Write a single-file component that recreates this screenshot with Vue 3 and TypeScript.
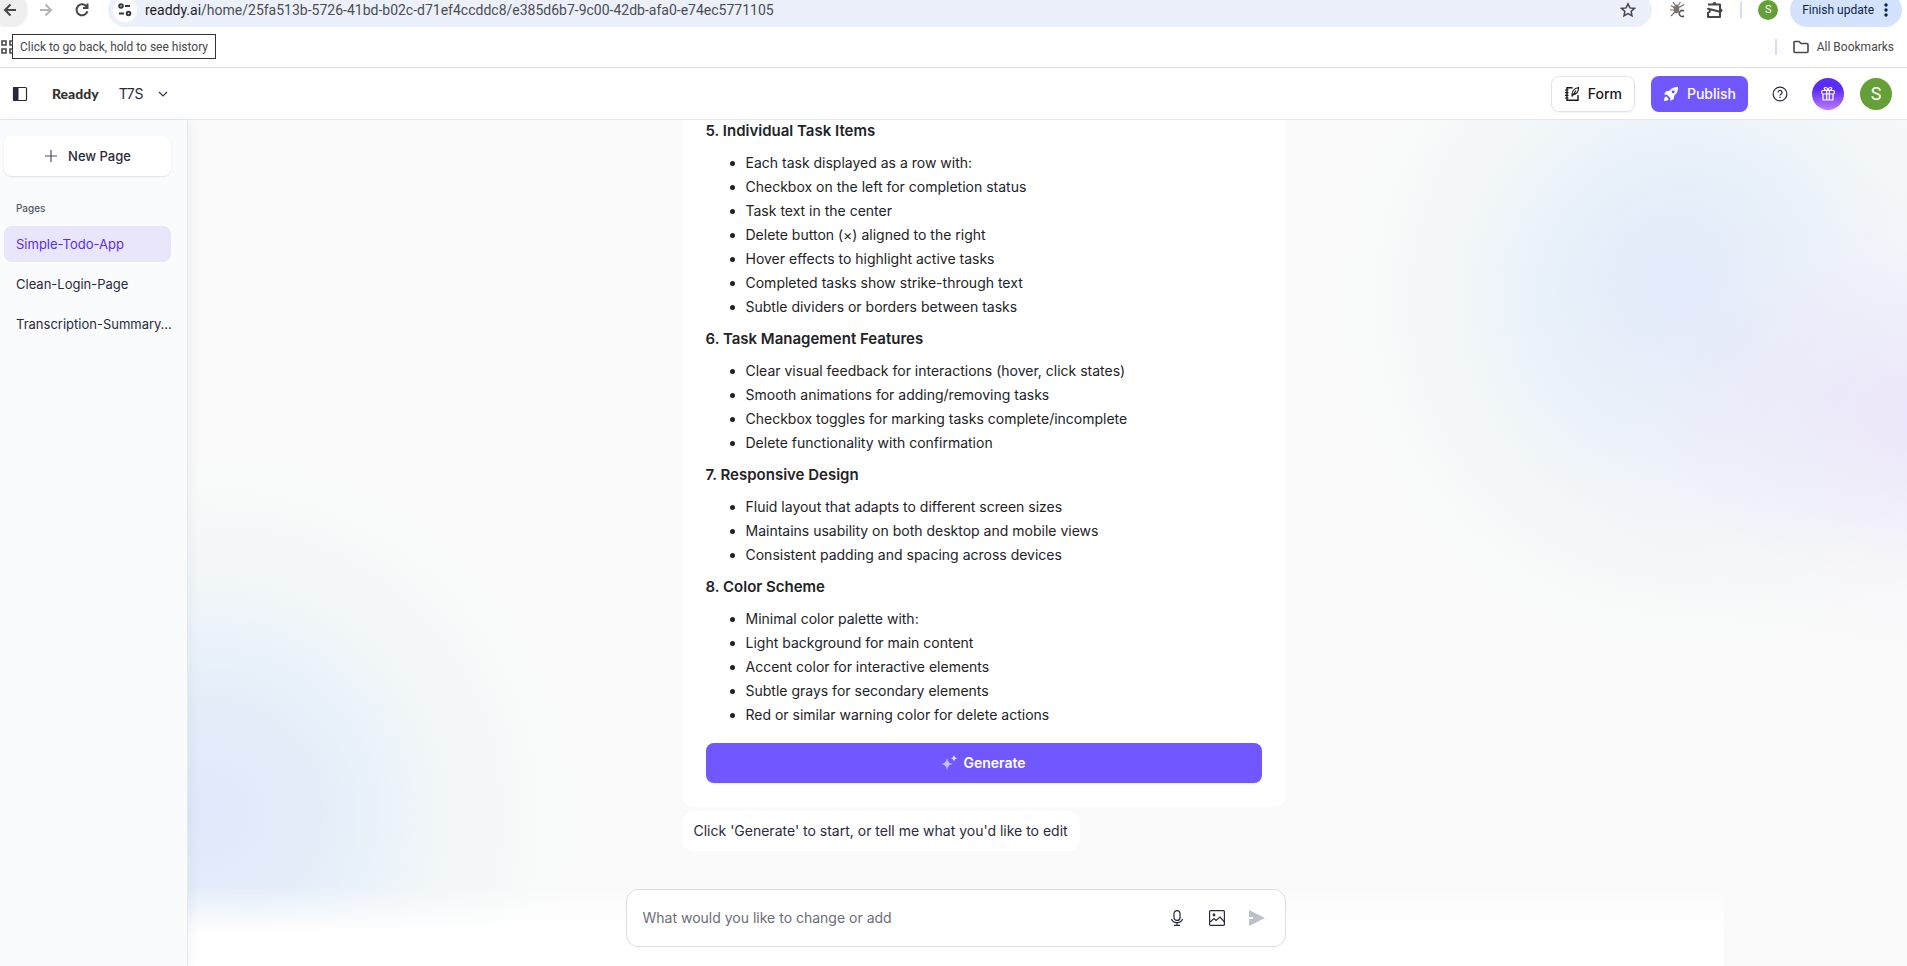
<script setup lang="ts">
import { ref } from 'vue'

interface Section {
  title: string
  items: string[]
}

const pages = ['Simple-Todo-App', 'Clean-Login-Page', 'Transcription-Summary…']
const activePage = ref(pages[0])
const prompt = ref('')

const sections: Section[] = [
  {
    title: '5. Individual Task Items',
    items: [
      'Each task displayed as a row with:',
      'Checkbox on the left for completion status',
      'Task text in the center',
      'Delete button (×) aligned to the right',
      'Hover effects to highlight active tasks',
      'Completed tasks show strike-through text',
      'Subtle dividers or borders between tasks',
    ],
  },
  {
    title: '6. Task Management Features',
    items: [
      'Clear visual feedback for interactions (hover, click states)',
      'Smooth animations for adding/removing tasks',
      'Checkbox toggles for marking tasks complete/incomplete',
      'Delete functionality with confirmation',
    ],
  },
  {
    title: '7. Responsive Design',
    items: [
      'Fluid layout that adapts to different screen sizes',
      'Maintains usability on both desktop and mobile views',
      'Consistent padding and spacing across devices',
    ],
  },
  {
    title: '8. Color Scheme',
    items: [
      'Minimal color palette with:',
      'Light background for main content',
      'Accent color for interactive elements',
      'Subtle grays for secondary elements',
      'Red or similar warning color for delete actions',
    ],
  },
]
</script>

<template>
  <div class="window">
    <div class="toolbar">
      <div class="toolbar-row">
        <button class="nav-btn hovered" aria-label="Back">
          <svg width="16" height="16" viewBox="0 0 16 16" fill="none" stroke="#45474a" stroke-width="2"><path d="M14 8H3M8.500 2.500L3 8l5.500 5.500" /></svg>
        </button>
        <button class="nav-btn" aria-label="Forward">
          <svg width="16" height="16" viewBox="0 0 16 16" fill="none" stroke="#b4b6b9" stroke-width="2"><path d="M2 8h11M7.500 2.500L13 8l-5.500 5.500" /></svg>
        </button>
        <button class="nav-btn" aria-label="Reload">
          <svg width="16" height="16" viewBox="0 0 16 16" fill="none" stroke="#45474a" stroke-width="2"><path d="M12.800 5A5.500 5.500 0 1 0 13.400 9.200M13.500 1.500V6H9" /></svg>
        </button>
        <div class="address">
          <button class="site-info" aria-label="Site information">
            <svg width="16" height="16" viewBox="0 0 16 16" fill="none" stroke="#34373b" stroke-width="2"><circle cx="4" cy="4" r="1.800" /><path d="M8 4h5M2 11.500h5" /><circle cx="11.500" cy="11.500" r="1.800" /></svg>
          </button>
          <span class="url"><span class="host">readdy.ai</span>/home/25fa513b-5726-41bd-b02c-d71ef4ccddc8/e385d6b7-9c00-42db-afa0-e74ec5771105</span>
          <button class="plain" aria-label="Bookmark this page">
            <svg width="16" height="16" viewBox="0 0 16 16" fill="none" stroke="#45474a" stroke-width="1.500"><path d="M8 1.800l1.900 4.100 4.500.5-3.300 3 .9 4.400L8 11.600l-4 2.200.9-4.400-3.300-3 4.500-.5z" /></svg>
          </button>
        </div>
        <div class="extensions">
          <button class="plain" aria-label="Debugger extension">
            <svg width="16" height="16" viewBox="0 0 16 16" fill="none" stroke="#7a736b" stroke-width="1.200"><ellipse cx="6.500" cy="7" rx="2.200" ry="3.800" fill="#7a736b" /><path d="M5 3L3 0M8.500 3l2-3M4.500 6L1 3.500M4.500 8H0M5 10l-4 4M9 5.500L14 2.500" /><path d="M14 9a3 3 0 1 0 0 5" stroke="#5a5653" stroke-width="1.600" /></svg>
          </button>
          <button class="plain" aria-label="Extensions">
            <svg width="18" height="18" viewBox="0 0 18 18" fill="none" stroke="#45474a" stroke-width="2"><path d="M2 3.500h12v4.700M14 10.800V16H2v-4.200c2.600-.5 2.600-3.600 0-4.100z" stroke-linejoin="round" /><path d="M6.500 3a2 2 0 0 1 4 0zM14.500 7.500a2 2 0 0 1 0 4z" fill="#45474a" stroke="none" /><path d="M14 7.500v4" /></svg>
          </button>
        </div>
        <span class="divider"></span>
        <span class="profile">S</span>
        <button class="update">Finish update
          <svg width="4" height="16" viewBox="0 0 4 16" fill="#0b2250"><circle cx="2" cy="3" r="1.700" /><circle cx="2" cy="8" r="1.700" /><circle cx="2" cy="13" r="1.700" /></svg>
        </button>
      </div>
    </div>

    <div class="bookmarks">
      <button class="plain" aria-label="Apps">
        <svg width="16" height="16" viewBox="0 0 16 16" fill="none" stroke="#45474a" stroke-width="1.600"><path d="M2 2h4v4H2zM10 2h4v4h-4zM2 10h4v4H2zM10 10h4v4h-4z" /></svg>
      </button>
      <div class="tooltip" role="tooltip">Click to go back, hold to see history</div>
      <div class="all-bookmarks">
        <span class="divider"></span>
        <button class="bookmark-btn">
          <svg width="16" height="14" viewBox="0 0 16 14" fill="none" stroke="#45474a" stroke-width="1.600"><path d="M1 2.500a1 1 0 0 1 1-1h4l2 2h6a1 1 0 0 1 1 1v7a1 1 0 0 1-1 1H2a1 1 0 0 1-1-1z" /></svg>
          All Bookmarks
        </button>
      </div>
    </div>

    <header class="app-header">
      <button class="plain" aria-label="Toggle sidebar">
        <svg width="16" height="16" viewBox="0 0 16 16" fill="none" stroke="#292b3d"><rect x="1.500" y="1.500" width="13" height="13" rx="1" stroke-width="1.200" /><path d="M1.500 1.500H6v13H1.500z" fill="#292b3d" /></svg>
      </button>
      <a class="brand" href="#">Readdy</a>
      <button class="project">T7S
        <svg width="10" height="10" viewBox="0 0 10 10" fill="none" stroke="#34364a" stroke-width="1.200"><path d="M1 3l4 4 4-4" /></svg>
      </button>
      <div class="actions">
        <button class="form-btn">
          <svg width="16" height="16" viewBox="0 0 16 16" fill="none" stroke="#17181c" stroke-width="1.400"><path d="M8.500 1.700H3v12.600h11V9" /><path d="M1 4h3.500M1 6.700h3.500M1 9.300h3.500M1 12h3.500" stroke-width="1.200" /><path d="M8 10.500c-.5-4 1.500-8 6.500-9 .3 4-2 7-6 7.300M8 10.500L12 4.500" stroke-width="1.200" /></svg>
          Form
        </button>
        <button class="publish-btn">
          <svg width="16" height="16" viewBox="0 0 16 16" fill="#fff"><path fill-rule="evenodd" d="M15 1c-3.800-.2-6.500 1-8.500 3.700L3 5.300 1 8.500l3 .2L7.300 12l.2 3 3.200-2 .6-3.500C14 7.500 15.200 4.800 15 1zM10.200 7.300a1.500 1.500 0 1 1 0-3 1.500 1.500 0 0 1 0 3z" /><path d="M3 10.300c-1.300.7-1.800 2-2 4.700 2.700-.2 4-.7 4.700-2z" /></svg>
          Publish
        </button>
        <button class="round" aria-label="Help">
          <svg width="16" height="16" viewBox="0 0 16 16" fill="none" stroke="#292b3d" stroke-width="1.200"><circle cx="8" cy="8" r="6.900" /><path d="M6 6.500a2 2 0 1 1 2.800 1.800c-.6.3-.8.600-.8 1.200" /><path d="M8 10.800v1.200" stroke-width="1.400" /></svg>
        </button>
        <button class="round gift" aria-label="Rewards">
          <svg width="16" height="16" viewBox="0 0 16 16" fill="none" stroke="#fff" stroke-width="1.200"><rect x="1.800" y="4.500" width="12.400" height="3.500" rx=".8" /><path d="M3 8v6h10V8M6.700 4.500V14M9.300 4.500V14M8 4.500C3.500 4.500 3.500 1.500 5.500 1.500c1.500 0 2.500 1.500 2.500 3 0-1.500 1-3 2.500-3 2 0 2 3-2.500 3z" /></svg>
        </button>
        <button class="round avatar" aria-label="Account">S</button>
      </div>
    </header>

    <div class="body">
      <nav class="sidebar">
        <button class="new-page">
          <svg width="14" height="14" viewBox="0 0 14 14" fill="none" stroke="#4d4f5c" stroke-width="1.200"><path d="M7 1v12M1 7h12" /></svg>
          New Page
        </button>
        <h2 class="pages-label">Pages</h2>
        <ul class="page-list">
          <li v-for="page in pages" :key="page">
            <button class="page" :class="{ active: page === activePage }" @click="activePage = page">{{ page }}</button>
          </li>
        </ul>
      </nav>

      <main class="main">
        <div class="fade"></div>
        <div class="column">
          <div class="messages">
            <article class="card">
              <section v-for="section in sections" :key="section.title">
                <h3>{{ section.title }}</h3>
                <ul>
                  <li v-for="item in section.items" :key="item">{{ item }}</li>
                </ul>
              </section>
              <button class="generate">
                <svg width="16" height="16" viewBox="0 0 16 16" fill="#fff"><path opacity=".6" d="M6 3c.8 3.800 2 5 5.500 6C8 10 6.800 11.200 6 15.500 5.200 11.200 4 10 .5 9 4 8 5.200 6.800 6 3z" /><path opacity=".85" d="M13 0c.5 2 1.200 2.800 3 3.200-1.800.5-2.500 1.200-3 3.300-.5-2.100-1.200-2.800-3-3.300 1.800-.4 2.500-1.200 3-3.200z" /></svg>
                Generate
              </button>
            </article>
            <p class="note">Click 'Generate' to start, or tell me what you'd like to edit</p>
          </div>
          <form class="composer" @submit.prevent>
            <input v-model="prompt" type="text" aria-label="Message" placeholder="What would you like to change or add" />
            <button class="plain" type="button" aria-label="Voice input">
              <svg width="16" height="16" viewBox="0 0 16 16" fill="none" stroke="#292b3d" stroke-width="1.200"><rect x="5" y=".6" width="6" height="9.800" rx="3" /><path d="M2.500 9c.8 2.500 3 3.700 5.500 3.700s4.700-1.200 5.500-3.700M8 12.700V15M5 15.300h6" /></svg>
            </button>
            <button class="plain" type="button" aria-label="Attach image">
              <svg width="16" height="16" viewBox="0 0 16 16" fill="none" stroke="#292b3d" stroke-width="1.200"><rect x=".6" y=".6" width="14.800" height="14.800" rx="1" /><path d="M1 12l4-3.500 2 2L11 7l4.500 5" /><circle cx="5" cy="5" r=".8" fill="#292b3d" /></svg>
            </button>
            <button class="plain" type="submit" aria-label="Send">
              <svg width="16" height="16" viewBox="0 0 16 16" fill="#bcc0ca"><path d="M0 0l16 8-16 8V9h4V7H0z" /></svg>
            </button>
          </form>
        </div>
      </main>
    </div>
  </div>
</template>

<style>
html,
body {
  margin: 0;
  height: 100%;
}
</style>

<style scoped>
* {
  box-sizing: border-box;
}

.window {
  display: flex;
  flex-direction: column;
  height: 100vh;
  overflow: hidden;
  background: #fff;
  color: #292b3d;
  font: 14px/20px Inter, "Liberation Sans", sans-serif;
}

button {
  display: flex;
  align-items: center;
  justify-content: center;
  border: 0;
  padding: 0;
  background: none;
  color: inherit;
  font: inherit;
  white-space: nowrap;
  cursor: pointer;
}

svg {
  flex: none;
  display: block;
}

/* Browser chrome */
.toolbar {
  flex: none;
  display: flex;
  align-items: flex-end;
  height: 27px;
  overflow: hidden;
  font-family: Roboto, "Noto Sans", sans-serif;
}

.toolbar-row {
  flex: 1;
  display: flex;
  align-items: center;
  height: 34px;
  margin-left: -8px;
  padding-right: 5px;
}

.nav-btn {
  width: 36px;
  height: 36px;
  border-radius: 18px;
}

.hovered {
  background: #efefef;
}

.address {
  flex: 1;
  display: flex;
  align-items: center;
  height: 34px;
  margin-left: 8px;
  padding: 0 16px 0 5px;
  border-radius: 17px;
  background: #ecf0fa;
}

.site-info {
  width: 24px;
  height: 24px;
  border-radius: 12px;
  background: #fff;
}

.url {
  flex: 1;
  margin-left: 8px;
  color: #4a4d52;
}

.host {
  color: #1f2023;
}

.extensions {
  display: flex;
  align-items: center;
  gap: 20px;
  margin: 0 16px 0 18px;
}

.divider {
  width: 2px;
  height: 16px;
  background: #cfdffb;
}

.profile {
  width: 20px;
  height: 20px;
  margin: 0 12px 0 16px;
  border-radius: 10px;
  background: #649f37;
  color: #fff;
  font-size: 11px;
  text-align: center;
}

.update {
  gap: 10px;
  height: 34px;
  padding: 0 14px 0 12px;
  border-radius: 17px;
  background: #d3e3fd;
  color: #0b2250;
  font-size: 12px;
}

.bookmarks {
  position: relative;
  flex: none;
  display: flex;
  align-items: center;
  justify-content: space-between;
  height: 41px;
  padding: 0 13px 0 0;
  border-bottom: 1px solid #dfe0e2;
  font: 12px/16px Roboto, "Noto Sans", sans-serif;
}

.tooltip {
  position: absolute;
  left: 12px;
  top: 7px;
  padding: 4px 7px 3px;
  border: 1px solid #333;
  background: #fff;
  color: #46484c;
}

.all-bookmarks,
.bookmark-btn {
  display: flex;
  align-items: center;
}

.all-bookmarks {
  gap: 16px;
}

.bookmark-btn {
  gap: 8px;
  color: #46484c;
}

/* Application header */
.app-header {
  flex: none;
  display: flex;
  align-items: center;
  height: 52px;
  padding: 0 15px 0 12px;
  border-bottom: 1px solid #e6e7eb;
}

.brand {
  margin: 0 20px 0 24px;
  color: #333;
  font: 900 14px/20px Lato, sans-serif;
  text-decoration: none;
}

.project {
  gap: 14px;
}

.actions {
  display: flex;
  align-items: center;
  gap: 16px;
  margin-left: auto;
}

.form-btn,
.publish-btn {
  gap: 8px;
  height: 36px;
  padding: 0 12px;
  border-radius: 8px;
  font-weight: 500;
}

.form-btn {
  border: 1px solid #e3e4e8;
  color: #17181c;
  box-shadow: 0 1px 2px rgba(0, 0, 0, 0.06);
}

.publish-btn {
  background: #7057ff;
  color: #fff;
}

.round {
  width: 32px;
  height: 32px;
  border-radius: 16px;
}

.gift {
  background: linear-gradient(#5a2cf5 35%, #c07bff);
}

.avatar {
  background: #649f37;
  color: #fff;
  font: 18px/32px Roboto, sans-serif;
}

/* Sidebar */
.body {
  flex: 1;
  min-height: 0;
  display: flex;
}

.sidebar {
  position: relative;
  z-index: 1;
  flex: none;
  width: 188px;
  padding: 16px 16px 0 4px;
  border-right: 1px solid #e6e8ef;
  background: #fafbfd;
  box-shadow: 2px 0 12px rgba(40, 40, 60, 0.05);
  font-size: 13px;
}

.new-page {
  gap: 10px;
  width: 100%;
  height: 40px;
  border-radius: 8px;
  background: #fff;
  box-shadow: 0 1px 2px rgba(0, 0, 0, 0.1);
  font-weight: 500;
}

.pages-label {
  margin: 24px 0 10px 12px;
  color: #555765;
  font-size: 10px;
  font-weight: 500;
  line-height: 16px;
}

.page-list {
  display: flex;
  flex-direction: column;
  gap: 4px;
  margin: 0;
  padding: 0;
  list-style: none;
}

.page {
  justify-content: flex-start;
  width: 100%;
  height: 36px;
  padding-left: 12px;
  border-radius: 8px;
}

.active {
  background: #e9e5fb;
  color: #5a2cf5;
}

/* Conversation */
.main {
  position: relative;
  flex: 1;
  display: flex;
  justify-content: center;
  min-width: 0;
  overflow: hidden;
  background:
    radial-gradient(ellipse 440px 260px at 102% 35%, rgba(235, 228, 250, 0.95), rgba(236, 231, 250, 0.6) 35%, rgba(244, 241, 250, 0.25) 68%, rgba(250, 250, 250, 0)),
    radial-gradient(ellipse 360px 370px at 87% 21%, #dfe9fb, #e6eff9 30%, #f1f6f9 60%, #f8faf9 85%, rgba(250, 250, 250, 0)),
    radial-gradient(ellipse 390px 380px at 1% 82%, #dfe8fa, #e4eef9 30%, #f1f6f9 60%, #f8faf9 85%, rgba(250, 250, 250, 0)),
    #fafafa;
}

.fade {
  position: absolute;
  left: 0;
  right: 183px;
  bottom: 0;
  height: 80px;
  background: linear-gradient(rgba(255, 255, 255, 0), #fff 60%);
}

.column {
  position: relative;
  display: flex;
  flex-direction: column;
  justify-content: flex-end;
  width: 660px;
  max-width: 100%;
  height: 100%;
  margin-right: 184px;
  padding-bottom: 19px;
}

.messages {
  flex: none;
  display: flex;
  flex-direction: column;
  align-items: flex-start;
  gap: 4px;
  margin: 0 0 38px 56px;
}

.card {
  width: 100%;
  padding: 0 24px 24px;
  border-radius: 0 0 12px 12px;
  background: #fff;
  color: #222327;
}

.card h3 {
  margin: 0 0 8px;
  font-size: 15px;
  font-weight: 600;
  line-height: 24px;
}

.card ul {
  margin: 0 0 8px;
  padding-left: 40px;
  line-height: 24px;
}

.generate {
  gap: 6px;
  width: 100%;
  height: 40px;
  margin-top: 16px;
  border-radius: 8px;
  background: #7057ff;
  box-shadow: 0 1px 2px rgba(0, 0, 0, 0.1);
  color: #fff;
  font-weight: 600;
}

.note {
  margin: 0;
  padding: 10px 12px;
  border-radius: 12px;
  background: #fff;
}

.composer {
  flex: none;
  display: flex;
  align-items: center;
  gap: 24px;
  height: 58px;
  padding: 0 20px 0 16px;
  border: 1px solid #dadce5;
  border-radius: 12px;
  background: #fff;
}

.composer input {
  flex: 1;
  min-width: 0;
  border: 0;
  padding: 0;
  outline: 0;
  background: none;
  color: inherit;
  font: inherit;
}

.composer input::placeholder {
  color: #6b6d7a;
  opacity: 1;
}
</style>
